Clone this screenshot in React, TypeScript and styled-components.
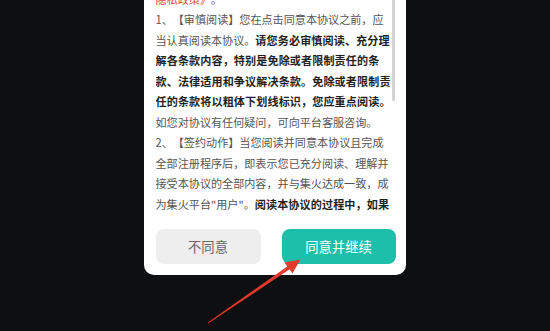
import React from 'react'
import styled, { createGlobalStyle } from 'styled-components'

const GlobalStyle = createGlobalStyle`
  html, body {
    margin: 0;
    padding: 0;
    background: #0e0f11;
  }
  body {
    font-family: "Noto Sans CJK SC", "Noto Sans", sans-serif;
  }
`

const Page = styled.div`
  position: relative;
  height: 331px;
  overflow: hidden;
  display: flex;
  flex-direction: column;
  justify-content: flex-end;
  align-items: center;
  padding-bottom: 56px;
  box-sizing: border-box;
  background: #0e0f11;
`

const Card = styled.div`
  flex-shrink: 0;
  width: 262px;
  margin-left: -1px;
  background: #ffffff;
  border-radius: 10px;
  padding: 0 10px 11px 12px;
  box-sizing: border-box;
  display: flex;
  flex-direction: column;
`

// scrolled agreement text; the part above the fold is off screen
const ScrollBox = styled.div`
  position: relative;
  height: 250px;
  overflow: hidden;
  display: flex;
  flex-direction: column;
  justify-content: flex-end;
`

const Thumb = styled.div`
  position: absolute;
  top: 0;
  right: 1px;
  width: 3px;
  height: 137px;
  border-radius: 2px;
  background: #d4d4d4;
`

const Line = styled.div`
  flex-shrink: 0;
  white-space: nowrap;
  font-size: 11.1px;
  line-height: 20.5px;
  height: 20.5px;
  color: #555555;
  text-spacing-trim: space-all;
`

const Strong = styled.span`
  font-weight: 700;
  color: #1f1f1f;
  letter-spacing: 0.1px;
`

const Link = styled.span`
  color: #e04a3c;
`

const ButtonRow = styled.div`
  display: flex;
  justify-content: space-between;
  padding-top: 15px;
`

const Button = styled.button<{ $primary?: boolean; $w: number }>`
  width: ${({ $w }) => $w}px;
  height: 35px;
  border: none;
  border-radius: 8px;
  font-family: "Noto Sans CJK SC", sans-serif;
  font-size: 13.3px;
  padding: 0;
  background: ${({ $primary }) => ($primary ? '#1cbfa9' : '#eeeeee')};
  color: ${({ $primary }) => ($primary ? '#ffffff' : '#666666')};
`

const Overlay = styled.svg`
  position: absolute;
  left: 0;
  top: 0;
  width: 550px;
  height: 331px;
  pointer-events: none;
`

const App: React.FC = () => (
  <Page>
    <GlobalStyle />
    <Card>
      <ScrollBox>
        <Line>
          <Link>隐私政策》</Link>。
        </Line>
        <Line>1、【审慎阅读】您在点击同意本协议之前，应</Line>
        <Line>
          当认真阅读本协议。<Strong>请您务必审慎阅读、充分理</Strong>
        </Line>
        <Line>
          <Strong>解各条款内容，特别是免除或者限制责任的条</Strong>
        </Line>
        <Line>
          <Strong>款、法律适用和争议解决条款。免除或者限制责</Strong>
        </Line>
        <Line>
          <Strong>任的条款将以粗体下划线标识，您应重点阅读。</Strong>
        </Line>
        <Line>如您对协议有任何疑问，可向平台客服咨询。</Line>
        <Line>2、【签约动作】当您阅读并同意本协议且完成</Line>
        <Line>全部注册程序后，即表示您已充分阅读、理解并</Line>
        <Line>接受本协议的全部内容，并与集火达成一致，成</Line>
        <Line>
          为集火平台"用户"。<Strong>阅读本协议的过程中，如果</Strong>
        </Line>
        <Thumb />
      </ScrollBox>
      <ButtonRow>
        <Button $w={105}>不同意</Button>
        <Button $w={114} $primary>
          同意并继续
        </Button>
      </ButtonRow>
    </Card>
    <Overlay viewBox="0 0 550 331">
      <polygon
        points="207.6,322.7 287.2,266.6 284.6,262.4 300.5,259.6 292.4,273.4 289.7,269.3 208.4,323.3"
        fill="#e23a2d"
      />
    </Overlay>
  </Page>
)

export default App
